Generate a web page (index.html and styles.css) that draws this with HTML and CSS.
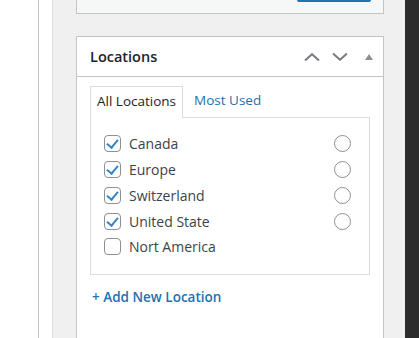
FILE: index.html
```html
<!DOCTYPE html>
<html lang="en">
<head>
  <meta charset="UTF-8" />
  <meta name="viewport" content="width=device-width, initial-scale=1.0"/>
  <title>Locations</title>
  <link rel="stylesheet" href="styles.css">
</head>
<body>

  <div id="adminMenu"></div>
  <div id="menuEdge"></div>

  <div id="sidebar">
    <div class="postbox" id="publishBox">
      <div class="publishButton"></div>
    </div>

    <div class="postbox" id="locationsBox">
      <div class="postboxHeader">
        <h2>Locations</h2>
        <div class="handleActions">
          <button class="handleButton" title="Move up">
            <svg width="16" height="8" viewBox="0 0 16 8"><path d="M1 7.5 L8 1.2 L15 7.5" fill="none" stroke="#787c82" stroke-width="2"/></svg>
          </button>
          <button class="handleButton" title="Move down">
            <svg width="16" height="8" viewBox="0 0 16 8"><path d="M1 0.5 L8 6.8 L15 0.5" fill="none" stroke="#787c82" stroke-width="2"/></svg>
          </button>
          <button class="handleButton toggle" title="Toggle panel">
            <svg width="8" height="6" viewBox="0 0 8 6"><path d="M0 6 L4 0 L8 6 Z" fill="#8c8f94"/></svg>
          </button>
        </div>
      </div>

      <div class="postboxInside">
        <ul class="tabs">
          <li class="tab active">All Locations</li>
          <li class="tab"><a href="#">Most Used</a></li>
        </ul>

        <div class="tabPanel">
          <ul class="termList">
            <li><label><input type="checkbox" checked> Canada</label><input type="radio" name="primary"></li>
            <li><label><input type="checkbox" checked> Europe</label><input type="radio" name="primary"></li>
            <li><label><input type="checkbox" checked> Switzerland</label><input type="radio" name="primary"></li>
            <li><label><input type="checkbox" checked> United State</label><input type="radio" name="primary"></li>
            <li><label><input type="checkbox"> Nort America</label></li>
          </ul>
        </div>

        <a href="#" class="addNew">+ Add New Location</a>
      </div>
    </div>
  </div>

  <div id="scrollEdge"></div>

</body>
</html>
```

FILE: styles.css
```css
body {
  font-family: 'Open Sans', sans-serif;
  margin: 0;
  padding: 0;
  height: 338px;
  overflow: hidden;
  display: flex;
  background-color: #f0f0f1;
  color: #3c434a;
}

#adminMenu {
  width: 38px;
  background-color: #fff;
  border-right: 1px solid #c3c4c7;
}

#menuEdge {
  width: 13px;
  background-color: #fff;
  border-right: 1px solid #dcdcde;
}

#sidebar {
  width: 308px;
  padding-left: 23px;
}

#scrollEdge {
  margin-left: auto;
  width: 14px;
  background-color: #2c2c2c;
}

.postbox {
  background-color: #fff;
  border: 1px solid #c3c4c7;
}

#publishBox {
  border-top: none;
  height: 13px;
  background-color: #f6f7f7;
  display: flex;
  justify-content: flex-end;
  padding-right: 12px;
}

.publishButton {
  width: 74px;
  height: 2px;
  background-color: #2271b1;
  border-radius: 0 0 3px 3px;
}

#locationsBox {
  margin-top: 22px;
}

.postboxHeader {
  display: flex;
  align-items: center;
  height: 39px;
  border-bottom: 1px solid #c3c4c7;
}

.postboxHeader h2 {
  margin: 0;
  padding-left: 13px;
  font-size: 14.5px;
  font-weight: 600;
  color: #1d2327;
}

.handleActions {
  margin-left: auto;
  display: flex;
  align-items: center;
  padding-right: 10px;
}

.handleButton {
  background: none;
  border: none;
  padding: 0;
  margin-left: 12px;
  display: flex;
  cursor: pointer;
}

.handleButton.toggle {
  margin-left: 17px;
}

.postboxInside {
  padding: 9px 13px 0;
  height: 252px;
}

.tabs {
  list-style: none;
  margin: 0;
  padding: 0;
  display: flex;
  align-items: flex-end;
}

.tab {
  font-size: 13.5px;
  height: 31px;
  line-height: 29px;
  padding: 0 6px;
}

.tab.active {
  border: 1px solid #dcdcde;
  border-bottom: none;
  background-color: #fff;
  margin-bottom: -1px;
  position: relative;
  z-index: 1;
  color: #1d2327;
}

.tab a {
  color: #2271b1;
  text-decoration: none;
  padding-left: 5px;
}

.tabPanel {
  border: 1px solid #dcdcde;
  padding: 13px 18px 14px 13px;
}

.termList {
  list-style: none;
  margin: 0;
  padding: 0;
}

.termList li {
  height: 25.75px;
  display: flex;
  align-items: center;
  justify-content: space-between;
  font-size: 14px;
}

.termList label {
  display: flex;
  align-items: center;
  gap: 8px;
}

.termList input {
  appearance: none;
  margin: 0;
  width: 17px;
  height: 17px;
  border: 1px solid #8c8f94;
  background-color: #fff;
}

.termList input[type="checkbox"] {
  border-radius: 4px;
  position: relative;
}

.termList input[type="checkbox"]:checked::before {
  content: "";
  position: absolute;
  left: 4px;
  top: 1px;
  width: 5px;
  height: 9px;
  border-right: 2.5px solid #3582c4;
  border-bottom: 2.5px solid #3582c4;
  transform: rotate(40deg);
}

.termList input[type="radio"] {
  border-radius: 50%;
}

.addNew {
  display: inline-block;
  margin-top: 13px;
  margin-left: 2px;
  font-size: 13.5px;
  font-weight: 600;
  color: #2271b1;
  text-decoration: none;
}
```
